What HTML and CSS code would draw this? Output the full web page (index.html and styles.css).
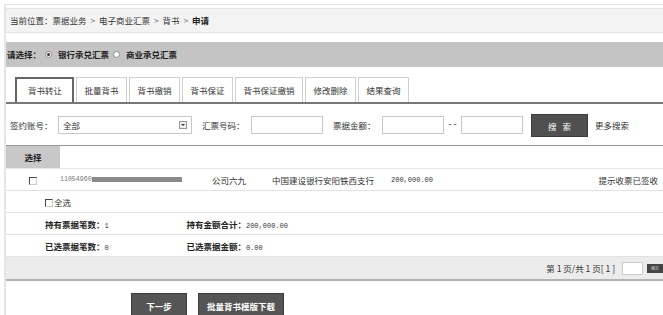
FILE: index.html
```html
<!DOCTYPE html>
<html lang="zh-cn">
<head>
    <meta charset="UTF-8">
    <title>背书申请</title>
    <link rel="stylesheet" href="styles.css">
</head>
<body>
    <div class="page">
        <div class="crumb">当前位置：票据业务 <span class="sep">&gt;</span> 电子商业汇票 <span class="sep">&gt;</span> 背书 <span class="sep">&gt;</span> <b>申请</b></div>

        <div class="choose">
            <b>请选择：</b>
            <span class="radio on"></span><b>银行承兑汇票</b>
            <span class="radio"></span><b>商业承兑汇票</b>
        </div>

        <div class="tabs">
            <a class="tab active">背书转让</a>
            <a class="tab">批量背书</a>
            <a class="tab">背书撤销</a>
            <a class="tab">背书保证</a>
            <a class="tab">背书保证撤销</a>
            <a class="tab">修改删除</a>
            <a class="tab">结果查询</a>
        </div>

        <div class="filter">
            <span class="lbl">签约账号：</span>
            <div class="select">全部<span class="arrow"></span></div>
            <span class="lbl lbl-2">汇票号码：</span>
            <div class="input w-72"></div>
            <span class="lbl lbl-2">票据金额：</span>
            <div class="input w-62"></div>
            <span class="dash">--</span>
            <div class="input w-62"></div>
            <a class="btn-search">搜 索</a>
            <a class="more">更多搜索</a>
        </div>

        <table class="list">
            <thead>
                <tr>
                    <th class="col-sel">选择</th>
                    <th colspan="5"></th>
                </tr>
            </thead>
            <tbody>
                <tr>
                    <td class="c"><span class="chk"></span></td>
                    <td class="acct">11054960<span class="mask"></span></td>
                    <td class="name">公司六九</td>
                    <td class="bank">中国建设银行安阳铁西支行</td>
                    <td class="num">200,000.00</td>
                    <td class="state">提示收票已签收</td>
                </tr>
                <tr>
                    <td colspan="6" class="all"><span class="chk"></span>全选</td>
                </tr>
                <tr>
                    <td colspan="6" class="sum">
                        <b class="k">持有票据笔数：</b><span class="v v-1">1</span>
                        <b class="k">持有金额合计：</b><span class="v">200,000.00</span>
                    </td>
                </tr>
                <tr>
                    <td colspan="6" class="sum">
                        <b class="k">已选票据笔数：</b><span class="v v-1">0</span>
                        <b class="k">已选票据金额：</b><span class="v">0.00</span>
                    </td>
                </tr>
            </tbody>
        </table>

        <div class="pager">
            第&nbsp;1&nbsp;页/共&nbsp;1&nbsp;页[&nbsp;1&nbsp;]
            <span class="go-input"></span>
            <span class="go">确定</span>
        </div>

        <div class="actions">
            <a class="btn">下一步</a>
            <a class="btn">批量背书模版下载</a>
        </div>
    </div>
</body>
</html>
```

FILE: styles.css
```css
body {
    margin: 0;
    padding: 0;
    background: #fff;
    color: #333;
    font-family: "Noto Sans CJK SC", "Liberation Sans", sans-serif;
    font-size: 8.5px;
}
.page {
    margin: 4px 0 0 4px;
    border-top: 1px solid #e2e2e2;
    border-left: 2px solid #e6e6e6;
    padding-top: 3px;
    height: 320px;
}
.crumb {
    height: 23px;
    line-height: 23px;
    padding-left: 4px;
    background: #f3f3f3;
    border-top: 1px solid #e4e4e4;
    border-bottom: 1px solid #e4e4e4;
}
.crumb .sep {
    color: #777;
    margin: 0 2px;
}
.crumb b {
    color: #222;
}
.choose {
    margin-top: 9px;
    height: 25px;
    line-height: 25px;
    background: #c4c4c4;
    padding-left: 1px;
    display: flex;
    align-items: center;
    color: #222;
}
.radio {
    display: inline-block;
    width: 5px;
    height: 5px;
    border: 1px solid #888;
    border-radius: 50%;
    background: #fff;
    margin: 0 6px 0 2px;
    position: relative;
}
.radio.on::after {
    content: "";
    position: absolute;
    left: 1px;
    top: 1px;
    width: 3px;
    height: 3px;
    border-radius: 50%;
    background: #333;
}
.choose b + .radio {
    margin-left: 4px;
}
.tabs {
    margin-top: 10px;
    padding-left: 9px;
    display: flex;
    gap: 2px;
    border-bottom: 2px solid #777;
    height: 25px;
}
.tab {
    display: block;
    line-height: 24px;
    border: 1px solid #d0d0d0;
    border-bottom: none;
    padding: 0 7.5px;
    color: #333;
    box-sizing: border-box;
    height: 25px;
}
.tab.active {
    border: 2px solid #666;
    border-bottom: none;
    padding: 0 10px 0 11px;
    line-height: 22px;
}
.filter {
    display: flex;
    align-items: center;
    padding: 9px 0 8px 4px;
    border-bottom: 1px solid #999;
    height: 24px;
}
.lbl {
    width: 48px;
}
.lbl-2 {
    width: 49px;
}
.select {
    width: 134px;
    line-height: 17px;
    border: 1px solid #c8c8c8;
    box-sizing: border-box;
    padding-left: 4px;
    margin-right: 10px;
    position: relative;
    height: 18px;
}
.arrow {
    position: absolute;
    right: 4px;
    top: 4px;
    width: 8px;
    height: 8px;
    border: 1px solid #999;
    box-sizing: border-box;
    background: #eee;
}
.arrow::after {
    content: "";
    position: absolute;
    left: 1px;
    top: 2px;
    border-left: 2px solid transparent;
    border-right: 2px solid transparent;
    border-top: 2px solid #333;
}
.input {
    height: 18px;
    border: 1px solid #c8c8c8;
    box-sizing: border-box;
    margin-right: 10px;
}
.w-72 {
    width: 72px;
}
.w-62 {
    width: 62px;
    margin-right: 0;
}
.dash {
    width: 17px;
    text-align: center;
    font-family: "Liberation Mono", monospace;
}
.btn-search {
    margin-left: 8px;
    width: 57px;
    height: 23px;
    line-height: 23px;
    background: #505050;
    color: #fff;
    text-align: center;
    border: 1px solid #3c3c3c;
    box-sizing: border-box;
    word-spacing: 4px;
}
.more {
    margin-left: 7px;
}
.list {
    width: 100%;
    border-collapse: collapse;
}
.list th {
    height: 22px;
    padding: 0;
    border-bottom: 1px solid #e6e6e6;
    font-weight: bold;
    color: #222;
}
.list th.col-sel {
    width: 54px;
    background: #c8c8c8;
}
.list td {
    height: 21px;
    padding: 0;
    border-bottom: 1px solid #e2e2e2;
    white-space: nowrap;
}
.list td.c {
    text-align: center;
    width: 54px;
}
.chk {
    display: inline-block;
    width: 6px;
    height: 6px;
    border: 1px solid #444;
    border-right-color: #ccc;
    border-bottom-color: #ccc;
    background: #fff;
    vertical-align: middle;
}
.acct {
    width: 152px;
    font-family: "Liberation Mono", monospace;
    font-size: 6.6px;
    color: #777;
}
.mask {
    display: inline-block;
    width: 90px;
    height: 5px;
    background: #8a8a8a;
    vertical-align: middle;
}
.name {
    width: 60px;
}
.bank {
    width: 119px;
}
.num {
    font-family: "Liberation Mono", monospace;
    font-size: 7px;
}
.state {
    text-align: right;
    padding-right: 5px !important;
}
.all {
    padding-left: 39px !important;
}
.all .chk {
    margin-right: 1px;
}
.sum {
    padding-left: 39px !important;
}
.k {
    color: #222;
}
.v {
    display: inline-block;
    font-family: "Liberation Mono", monospace;
    font-size: 7px;
}
.v-1 {
    width: 80px;
}
.pager {
    height: 22px;
    background: #ececec;
    border-bottom: 2px solid #b3b3b3;
    display: flex;
    align-items: center;
    justify-content: flex-end;
}
.go-input {
    display: inline-block;
    width: 19px;
    height: 11px;
    border: 1px solid #ccc;
    background: #fff;
    margin-left: 7px;
}
.go {
    display: inline-block;
    width: 16px;
    height: 9px;
    line-height: 9px;
    background: #444;
    color: #ccc;
    font-size: 4px;
    text-align: center;
    margin-left: 4px;
}
.actions {
    padding: 12px 0 0 125px;
    display: flex;
    gap: 11px;
}
.btn {
    height: 24px;
    line-height: 24px;
    padding: 0 8px;
    background: #555;
    color: #fff;
    font-weight: bold;
    min-width: 38px;
    text-align: center;
    border: 1px solid #3c3c3c;
}
```
